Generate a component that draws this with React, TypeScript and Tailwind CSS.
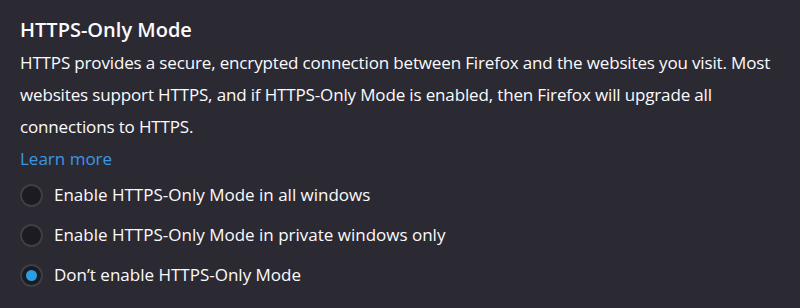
import React from "react";

const options = [
  { label: "Enable HTTPS-Only Mode in all windows", checked: false },
  { label: "Enable HTTPS-Only Mode in private windows only", checked: false },
  { label: "Don\u2019t enable HTTPS-Only Mode", checked: true },
];

export default function App() {
  return (
    <div
      className="w-[800px] h-[308px] bg-[#2b2a33] text-[#fbfbfe] px-[20px] pt-[16px]"
      style={{ fontFamily: '"Open Sans", "Noto Sans", sans-serif' }}
    >
      <h1 className="text-[20px] leading-[28px] font-semibold">HTTPS-Only Mode</h1>
      <p className="mt-[3px] text-[17px] leading-[32px] whitespace-nowrap tracking-[-0.15px]">
        HTTPS provides a secure, encrypted connection between Firefox and the websites you visit. Most
        <br />
        websites support HTTPS, and if HTTPS-Only Mode is enabled, then Firefox will upgrade all
        <br />
        connections to HTTPS.
      </p>
      <a className="block w-max text-[17px] leading-[32px] text-[#3b97e6]" href="#">
        Learn more
      </a>
      <div className="flex flex-col">
        {options.map((o) => (
          <label key={o.label} className="flex items-center h-[40px] gap-[11px] text-[17px]">
            <span className="flex items-center justify-center w-[23px] h-[23px] rounded-full border-2 border-[#3f3e46] bg-[#1c1b22]">
              {o.checked && <span className="w-[11px] h-[11px] rounded-full bg-[#2a9de5]" />}
            </span>
            <span>{o.label}</span>
          </label>
        ))}
      </div>
    </div>
  );
}
